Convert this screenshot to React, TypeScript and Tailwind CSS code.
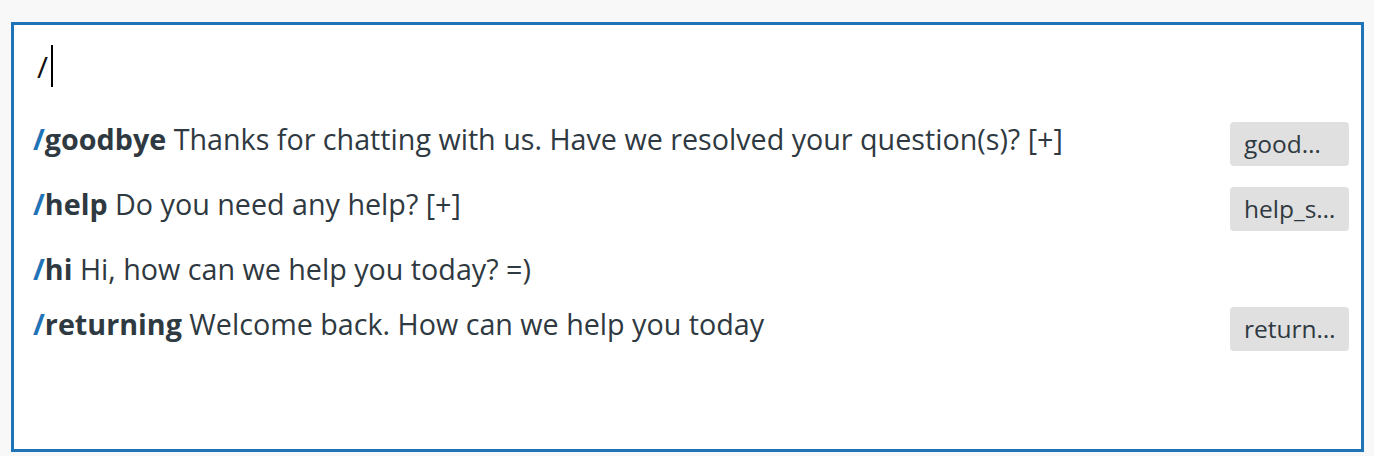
import React from 'react';

type Shortcut = {
  name: string;
  text: string;
  tag?: string;
};

const shortcuts: Shortcut[] = [
  { name: 'goodbye', text: 'Thanks for chatting with us. Have we resolved your question(s)? [+]', tag: 'good…' },
  { name: 'help', text: 'Do you need any help? [+]', tag: 'help_s…' },
  { name: 'hi', text: 'Hi, how can we help you today? =)' },
  { name: 'returning', text: 'Welcome back. How can we help you today', tag: 'return…' },
];

function ShortcutRow({ item }: { item: Shortcut }) {
  return (
    <div className="flex items-start justify-between pt-[10px] pb-[11px] pl-[19px] pr-[12px]">
      <div className="leading-[34px] text-[28.7px] text-[#2f3941] whitespace-nowrap">
        <span className="font-bold">
          <span className="text-[#1f73b7]">/</span>
          {item.name}
        </span>{' '}
        {item.text}
      </div>
      {item.tag && (
        <div className="flex items-center w-[119px] h-[44px] px-[14px] rounded-[4px] bg-[#e0e0e0] text-[24.5px] text-[#2f3941] whitespace-nowrap overflow-hidden">
          {item.tag}
        </div>
      )}
    </div>
  );
}

export default function App() {
  return (
    <div
      className="w-[1374px] h-[456px] bg-[#f8f8f8] pt-[22px] pl-[11px] pr-[10px] overflow-hidden"
      style={{ fontFamily: '"Open Sans", "Noto Sans", sans-serif' }}
    >
      <div className="h-[430px] bg-white border-[3px] border-[#1f73b7] flex flex-col">
        {/* Input with the typed slash */}
        <div className="h-[87px] pt-[20px] pl-[23px]">
          <div className="flex items-center h-[42px] text-[30px] text-[#111]">
            <span>/</span>
            <span className="ml-[3px] w-[2px] h-[42px] bg-black" />
          </div>
        </div>

        {/* Shortcut suggestions */}
        <div className="flex flex-col">
          {shortcuts.map((s) => (
            <ShortcutRow key={s.name} item={s} />
          ))}
        </div>
      </div>
    </div>
  );
}
